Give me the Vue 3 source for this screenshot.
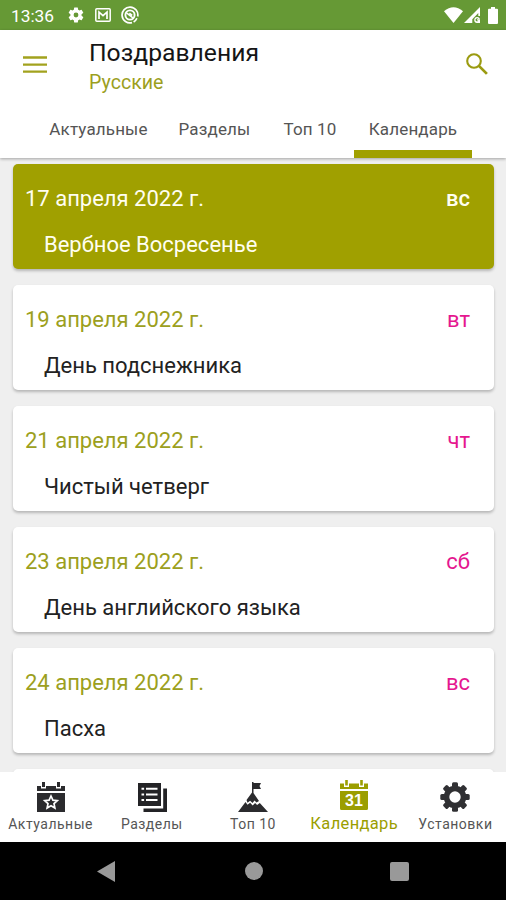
<template>
  <div class="screen">
    <div class="status-bar">
      <span class="clock">13:36</span>
      <svg class="st-gear" viewBox="0 0 24 24"><path fill="#fff" fill-rule="evenodd" d="M19.4 13a7.500 7.500 0 0 0 0-2l2.100-1.650a.5.5 0 0 0 .12-.64l-2-3.460a.5.5 0 0 0-.61-.22l-2.490 1a7.300 7.300 0 0 0-1.690-.98l-.38-2.650A.49.49 0 0 0 14 2h-4a.49.49 0 0 0-.49.42l-.38 2.650c-.61.25-1.170.59-1.690.98l-2.490-1a.49.49 0 0 0-.61.22l-2 3.460a.49.49 0 0 0 .12.64L4.570 11a7.900 7.900 0 0 0 0 2l-2.110 1.650a.5.5 0 0 0-.12.64l2 3.460c.12.22.39.3.61.22l2.490-1c.52.4 1.080.73 1.690.98l.38 2.650c.03.24.24.42.49.42h4c.25 0 .46-.18.49-.42l.38-2.650a7.700 7.700 0 0 0 1.690-.98l2.490 1c.23.09.49 0 .61-.22l2-3.460a.5.5 0 0 0-.12-.64zM12 15.200a3.200 3.200 0 1 1 0-6.400 3.200 3.200 0 0 1 0 6.400z"/></svg>
      <svg class="st-mail" viewBox="0 0 16 14"><rect x="0.8" y="0.8" width="14.400" height="12.400" rx="1" fill="none" stroke="#fff" stroke-width="1.500"/><path d="M4 11V4.200l4 3.400 4-3.400V11" fill="none" stroke="#fff" stroke-width="1.700"/></svg>
      <svg class="st-round" viewBox="0 0 18 18"><path d="M11 16.600A7.900 7.900 0 1 1 16.700 10.500" fill="none" stroke="#fff" stroke-width="1.700"/><path d="M15.900 12.200a7.900 7.900 0 0 1-3.300 3.800" fill="none" stroke="#fff" stroke-width="1.700"/><circle cx="9" cy="9" r="4.600" fill="none" stroke="#fff" stroke-width="1.900"/><path d="M5.200 6.600l7 5.600M8.400 7.100l2.800 2.200" stroke="#fff" stroke-width="1.500"/></svg>
      <span class="spacer"></span>
      <svg class="st-wifi" viewBox="0 0 19 16"><path fill="#fff" d="M0 4.300Q9.500-3.600 19 4.300L9.500 16z"/></svg>
      <svg class="st-signal" viewBox="0 0 16 16"><path fill="#fff" fill-rule="evenodd" d="M0 16L16 0v9h-1.700V6l-6 6.200V16zM10.200 12.800a3 3 0 0 1 5.800-.8h-1.700a1.500 1.500 0 1 0 0 1.600H13v-1.400h3V16h-3a3 3 0 0 1-2.800-3.200z"/></svg>
      <svg class="st-battery" viewBox="0 0 10 17"><path fill="#fff" d="M3 0h4v1.800h2a1 1 0 0 1 1 1V16a1 1 0 0 1-1 1H1a1 1 0 0 1-1-1V2.800a1 1 0 0 1 1-1h2z"/></svg>
    </div>

    <header class="header">
      <div class="toolbar">
        <svg class="burger" viewBox="0 0 24 18"><path d="M0 1.500h24M0 8.600h24M0 15.700h24" stroke="#a2a21e" stroke-width="2.300"/></svg>
        <div class="titles">
          <div class="title">Поздравления</div>
          <div class="subtitle">Русские</div>
        </div>
        <svg class="search" viewBox="0 0 22 22"><circle cx="8" cy="8" r="6.800" fill="none" stroke="#9b9b10" stroke-width="2.100"/><path d="M12.900 12.900l8 8" stroke="#9b9b10" stroke-width="2.700"/></svg>
      </div>
      <nav class="tabs">
        <div v-for="tab in tabs" :key="tab" class="tab" :class="{ active: tab === 'Календарь' }">{{ tab }}</div>
      </nav>
    </header>

    <main class="list">
      <div v-for="item in items" :key="item.date" class="card" :class="{ today: item.today }">
        <div class="card-head">
          <span class="date">{{ item.date }}</span>
          <span class="weekday">{{ item.day }}</span>
        </div>
        <div class="name">{{ item.name }}</div>
      </div>
      <div class="card"></div>
    </main>

    <nav class="bottom-nav">
      <div class="nav-item">
        <svg class="nav-icon" viewBox="0 0 30 30"><path fill="#2b2b2e" d="M1 4h4v2.500h5V4h10v2.500h5V4h4v5H1zM1 11h28v19H1z"/><path fill="#2b2b2e" d="M6 0h3v5H6zM21 0h3v5h-3z"/><path d="M15 14l1.900 4.100 4.400.5-3.300 3 .9 4.400-3.900-2.200-3.900 2.200.9-4.400-3.300-3 4.400-.5z" fill="none" stroke="#fff" stroke-width="1.700"/></svg>
        <span>Актуальные</span>
      </div>
      <div class="nav-item">
        <svg class="nav-icon" viewBox="0 0 30 30"><path fill="#232326" d="M1 1h23v23H1zM26.200 6.500H30V30H6.500v-3.600h19.700z"/><path d="M4.500 6.700h2.600M9 6.700h11.500M4.500 12.400h2.600M9 12.400h11.500M4.500 18.100h2.600M9 18.100h11.500" stroke="#fff" stroke-width="2"/></svg>
        <span>Разделы</span>
      </div>
      <div class="nav-item">
        <svg class="nav-icon" viewBox="0 0 30 30"><path fill="#2b2b2e" d="M14 0h1.500v1H23l-1.500 3L23 7h-7.500v4L21 19l-2.500 1.500-2-2-2 2.500-2.400-2.300-2.600 2L8.500 18 14 10.500zM7.500 20l2 2.700 2.600-1.900 2.600 2.600 2.400-2.500 2 2 2.700-2L30 30H0z"/></svg>
        <span>Топ 10</span>
      </div>
      <div class="nav-item active">
        <svg class="nav-icon" viewBox="0 0 30 30"><path fill="#9b9e00" d="M1 3.500h4V7h5V3.500h10V7h5V3.500h4V9H1zM1 11h28v17.500a1.500 1.500 0 0 1-1.500 1.500h-25A1.500 1.500 0 0 1 1 28.500z"/><path fill="#9b9e00" d="M6.200 0h2.600v5.500H6.200zM21.200 0h2.600v5.500h-2.600z"/><text x="15" y="26.300" text-anchor="middle" class="cal-num">31</text></svg>
        <span>Календарь</span>
      </div>
      <div class="nav-item">
        <svg class="nav-icon" viewBox="0 0 30 30"><circle cx="15" cy="15" r="8.500" fill="none" stroke="#303033" stroke-width="5.600"/><rect v-for="n in 8" :key="n" x="12" y="0.300" width="6" height="5" rx="1.500" fill="#303033" :transform="`rotate(${n * 45} 15 15)`"/></svg>
        <span>Установки</span>
      </div>
    </nav>

    <div class="system-bar">
      <svg class="sys-back" viewBox="0 0 18 21"><path fill="#999" d="M0 10.500L18 0v21z"/></svg>
      <span class="sys-home"></span>
      <span class="sys-recent"></span>
    </div>
  </div>
</template>

<script setup>
import { ref } from 'vue'

const tabs = ['Актуальные', 'Разделы', 'Топ 10', 'Календарь']

const items = ref([
  { date: '17 апреля 2022 г.', day: 'вс', name: 'Вербное Восресенье', today: true },
  { date: '19 апреля 2022 г.', day: 'вт', name: 'День подснежника' },
  { date: '21 апреля 2022 г.', day: 'чт', name: 'Чистый четверг' },
  { date: '23 апреля 2022 г.', day: 'сб', name: 'День английского языка' },
  { date: '24 апреля 2022 г.', day: 'вс', name: 'Пасха' },
])
</script>

<style>
body {
  background: #000;
}
</style>

<style scoped>
.screen {
  width: 506px;
  height: 900px;
  display: flex;
  flex-direction: column;
  overflow: hidden;
  background: #efefef;
  font-family: Roboto, "Liberation Sans", sans-serif;
}
.status-bar {
  flex: none;
  height: 30px;
  padding: 0 8px 0 11px;
  display: flex;
  align-items: center;
  background: #669935;
  color: #fff;
}
.clock {
  width: 56px;
  font-size: 17.300px;
  line-height: 30px;
  padding-top: 2px;
}
.st-gear { width: 18px; height: 18px; }
.st-mail { width: 16px; height: 14px; margin-left: 10px; }
.st-round { width: 18px; height: 18px; margin-left: 10px; }
.spacer { flex: 1; }
.st-wifi { width: 19px; height: 16px; }
.st-signal { width: 16px; height: 16px; margin-left: 1px; }
.st-battery { width: 10px; height: 17px; margin-left: 8px; }

.header {
  flex: none;
  height: 128px;
  background: #fff;
  box-shadow: 0 1px 3px rgba(0, 0, 0, 0.32);
  position: relative;
}
.toolbar {
  height: 72px;
  display: flex;
  padding: 0 18px 0 23px;
}
.burger {
  width: 24px;
  height: 18px;
  margin-top: 26px;
}
.titles {
  flex: 1;
  padding: 7px 0 0 42px;
}
.title {
  font-size: 24.700px;
  line-height: 32px;
  color: #151515;
}
.subtitle {
  font-size: 19.600px;
  line-height: 28px;
  color: #9c9f1e;
}
.search {
  width: 22px;
  height: 22px;
  margin-top: 23px;
}
.tabs {
  display: flex;
  height: 56px;
  padding-left: 34px;
  box-sizing: border-box;
}
.tab {
  box-sizing: border-box;
  width: 129px;
  font-size: 17px;
  line-height: 20px;
  padding-top: 17px;
  letter-spacing: 0.150px;
  text-align: center;
  white-space: nowrap;
  color: #555;
}
.tab:nth-child(2) { width: 103px; }
.tab:nth-child(3) { width: 88px; }
.tab:nth-child(4) { width: 118px; }
.tab.active {
  border-bottom: 8px solid #a0a000;
}

.list {
  flex: 1;
  min-height: 0;
  overflow: hidden;
  padding: 6px 12px 0 13px;
}
.card {
  box-sizing: border-box;
  height: 105px;
  margin-bottom: 16px;
  padding: 20px 24px 0 12px;
  border-radius: 5px;
  background: #fff;
  box-shadow: 0 2px 3px rgba(0, 0, 0, 0.24);
}
.card-head {
  display: flex;
  justify-content: space-between;
  font-size: 22px;
  line-height: 30px;
}
.date {
  color: #9c9f20;
}
.weekday {
  color: #e5178f;
}
.name {
  margin-top: 16px;
  padding-left: 19px;
  font-size: 22px;
  line-height: 30px;
  color: #222;
}
.card.today {
  background: #a0a000;
}
.today .date,
.today .weekday,
.today .name {
  color: #fffef0;
}
.today .weekday {
  font-weight: 500;
}

.bottom-nav {
  flex: none;
  height: 70px;
  display: flex;
  background: #fff;
  position: relative;
}
.nav-item {
  flex: 1 1 0;
  min-width: 0;
  display: flex;
  flex-direction: column;
  align-items: center;
  padding-top: 10px;
  font-size: 14px;
  line-height: 20px;
  letter-spacing: 0.500px;
  color: #555;
  white-space: nowrap;
}
.nav-icon {
  flex: none;
  width: 30px;
  height: 30px;
  margin-bottom: 2px;
}
.nav-item.active {
  padding-top: 8px;
  font-size: 16.500px;
  letter-spacing: 0.350px;
  color: #9b9e00;
}
.active .nav-icon {
  margin-bottom: 4px;
}
.cal-num {
  font-family: "Liberation Sans", sans-serif;
  font-size: 16px;
  font-weight: bold;
  letter-spacing: 0;
  fill: #fff;
}

.system-bar {
  flex: none;
  height: 58px;
  display: flex;
  align-items: center;
  background: #000;
}
.sys-back {
  width: 18px;
  height: 21px;
  margin-left: 97px;
}
.sys-home {
  width: 18px;
  height: 18px;
  margin-left: 130px;
  border-radius: 50%;
  background: #999;
}
.sys-recent {
  width: 19px;
  height: 19px;
  margin-left: 127px;
  border-radius: 2px;
  background: #999;
}
</style>
